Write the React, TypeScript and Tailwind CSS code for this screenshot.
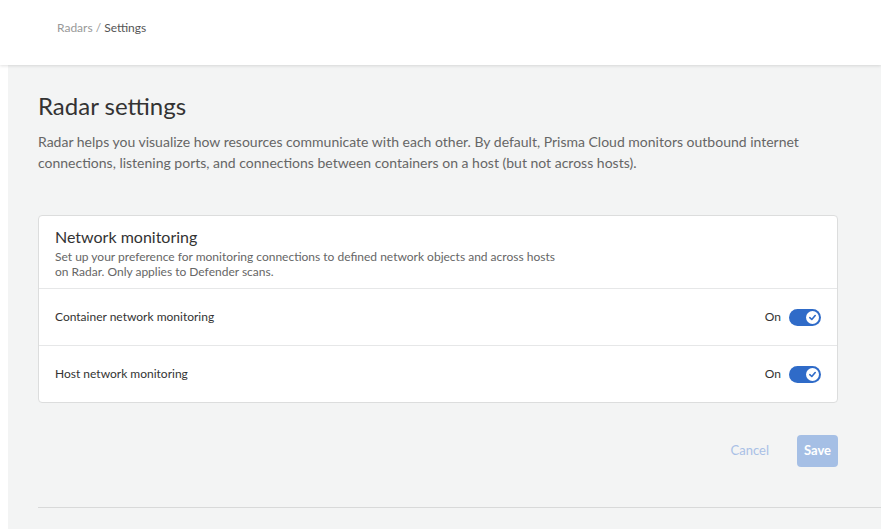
import React from "react";

const Toggle = () => (
  <div className="w-[32px] h-[17px] rounded-full bg-[#2f6bc8] flex items-center justify-end pr-[2px]">
    <div className="w-[13px] h-[13px] rounded-full bg-white grid place-items-center">
      <svg width="9" height="9" viewBox="0 0 10 10" fill="none">
        <path d="M2 5.2 L4.2 7.2 L8 2.8" stroke="#2f6bc8" strokeWidth="1.8" strokeLinecap="round" strokeLinejoin="round" />
      </svg>
    </div>
  </div>
);

const Row = ({ label, last }: { label: string; last?: boolean }) => (
  <div className={`px-[16px] flex items-center justify-between ${last ? "h-[56px]" : "h-[57px] border-b border-[#e6e7e8]"}`}>
    <span className="text-[12px] text-[#333]">{label}</span>
    <div className="flex items-center gap-[8px]">
      <span className="text-[12px] text-[#333]">On</span>
      <Toggle />
    </div>
  </div>
);

export default function App() {
  return (
    <div className="w-[881px] h-[529px] bg-white overflow-hidden" style={{ fontFamily: "Lato, 'Open Sans', sans-serif" }}>
      <header className="h-[65px] pl-[57px] pt-[14px] relative z-10 shadow-[0_1px_3px_rgba(0,0,0,0.12)]">
        <span className="text-[12px] text-[#999]">Radars</span>
        <span className="text-[12px] text-[#999]"> / </span>
        <span className="text-[12px] text-[#555]">Settings</span>
      </header>
      <main className="ml-[8px] h-[464px] bg-[#f3f4f4] pl-[30px] pt-[26px]">
        <h1 className="text-[24px] leading-[30px] text-[#333]">Radar settings</h1>
        <p className="mt-[10px] text-[14px] leading-[21px] text-[#666] w-[800px]">
          Radar helps you visualize how resources communicate with each other. By default, Prisma Cloud monitors outbound internet connections, listening ports, and connections between containers on a host (but not across hosts).
        </p>
        <section className="mt-[42px] w-[800px] bg-white border border-[#dcdddd] rounded-[4px]">
          <div className="px-[16px] pt-[10px] pb-[9px] border-b border-[#e6e7e8]">
            <h2 className="text-[16px] leading-[21px] text-[#333]">Network monitoring</h2>
            <p className="mt-[2px] text-[12px] leading-[15px] text-[#666] w-[510px]">
              Set up your preference for monitoring connections to defined network objects and across hosts on Radar. Only applies to Defender scans.
            </p>
          </div>
          <Row label="Container network monitoring" />
          <Row label="Host network monitoring" last />
        </section>
        <div className="w-[800px] mt-[32px] flex items-center justify-end gap-[28px]">
          <button className="text-[13px] text-[#a9c0e6]">Cancel</button>
          <button className="w-[41px] h-[32px] rounded-[4px] bg-[#a5bfe5] text-white text-[13px] font-bold">Save</button>
        </div>
        <div className="mt-[40px] border-t border-[#d8d9d9]" />
      </main>
    </div>
  );
}
